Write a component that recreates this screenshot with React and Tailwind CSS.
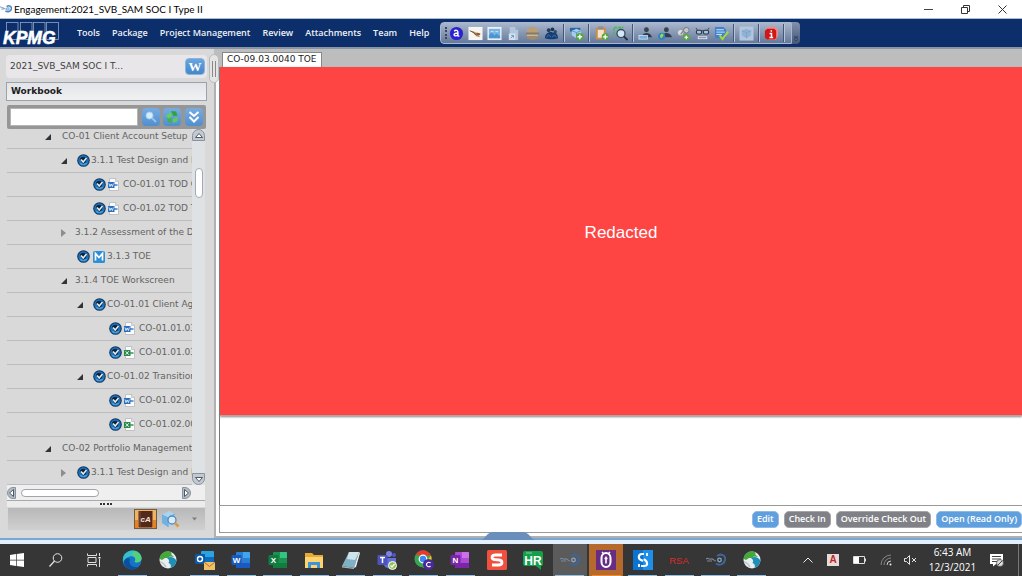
import { useState } from "react";

const menus = ["Tools", "Package", "Project Management", "Review", "Attachments", "Team", "Help"];

const rows = [
  { text: "CO-01 Client Account Setup", level: 0, arrow: "open" },
  { text: "3.1.1 Test Design and I", level: 1, arrow: "open", check: true },
  { text: "CO-01.01 TOD C", level: 2, check: true, doc: "word" },
  { text: "CO-01.02 TOD T", level: 2, check: true, doc: "word" },
  { text: "3.1.2 Assessment of the D", level: 1, arrow: "closed" },
  { text: "3.1.3 TOE", level: 1, check: true, doc: "m" },
  { text: "3.1.4 TOE Workscreen", level: 1, arrow: "open" },
  { text: "CO-01.01 Client Ag", level: 2, arrow: "open", check: true },
  { text: "CO-01.01.03", level: 3, check: true, doc: "word" },
  { text: "CO-01.01.03", level: 3, check: true, doc: "excel" },
  { text: "CO-01.02 Transition", level: 2, arrow: "open", check: true },
  { text: "CO-01.02.00", level: 3, check: true, doc: "word" },
  { text: "CO-01.02.00", level: 3, check: true, doc: "excel" },
  { text: "CO-02 Portfolio Management", level: 0, arrow: "open" },
  { text: "3.1.1 Test Design and I", level: 1, arrow: "closed", check: true },
];

const indents = ["pl-[38px]", "pl-[54px]", "pl-[70px]", "pl-[86px]"];

function Swirl({ className }) {
  return (
    <svg viewBox="0 0 20 12" className={className} fill="none">
      <path d="M0 3c2-1 3 1 5 1s2 2 5 2M2 6h5" stroke="#7ea6cc" strokeWidth="1.800" />
      <path d="M11 2c4-3 9 0 8 4s-6 6-10 3" stroke="#4f86bf" strokeWidth="2.600" />
      <circle cx="13" cy="6" r="2.400" fill="#b4cde6" stroke="#7fa9d2" strokeWidth="1.400" />
      <path d="M14 5l3-2" stroke="#b9cbe0" />
    </svg>
  );
}

function KpmgLogo() {
  return (
    <svg viewBox="0 0 58 26" className="w-[58px] h-[26px] overflow-visible" role="img" aria-label="KPMG">
      <g fill="#0c2f6b" stroke="#8ea3c6" strokeWidth="0.8">
        <rect x="4.500" y="2.500" width="11.500" height="17" />
        <rect x="18.500" y="2.500" width="11.500" height="17" />
        <rect x="31.500" y="2.500" width="11.500" height="17" />
        <rect x="44.500" y="2.500" width="12" height="17" />
      </g>
      <text x="1" y="24" fontFamily="Liberation Sans, sans-serif" fontWeight="bold" fontStyle="italic" fontSize="17.5" fill="#fff" stroke="#fff" strokeWidth="0.5">
        KPMG
      </text>
    </svg>
  );
}

function CheckBall() {
  return (
    <svg viewBox="0 0 13 13" className="w-[13px] h-[13px]">
      <circle cx="6.500" cy="6.500" r="6.300" fill="#16385c" />
      <circle cx="6.500" cy="6.500" r="5.200" fill="#1b6fb9" />
      <path d="M2 8.500a5 5 0 0 0 9 0c-2 .8-6 .8-9 0z" fill="#3d9be0" />
      <path d="M3 4.500a5 5 0 0 1 7 0l-1.500 4-2.500 1.500-2-3z" fill="#0c2138" />
      <path d="M4 5.500l2.200 2.500 3.300-4" stroke="#dfe9f2" strokeWidth="1.700" fill="none" />
    </svg>
  );
}

function DocIcon({ kind }) {
  if (kind === "m") {
    return (
      <svg viewBox="0 0 12 12" className="w-3 h-3 ml-0.5">
        <rect width="12" height="12" rx="1.500" fill="#2f8fd6" />
        <path d="M2.500 9.500v-7l3.500 4 3.500-4v7" stroke="#fff" strokeWidth="1.700" fill="none" />
      </svg>
    );
  }
  const color = kind === "word" ? "#2b6fc4" : "#2a8a4c";
  return (
    <svg viewBox="0 0 13 13" className="w-[13px] h-[13px]">
      <path d="M2.500 .5h6L11.500 3.500V12.500H2.500z" fill="#fbfbfb" stroke="#b5b8bc" strokeWidth="0.800" />
      <path d="M8.500 .5v3h3" fill="#dde" stroke="#b5b8bc" strokeWidth="0.700" />
      <path d="M7 7h3.500" stroke={color} strokeWidth="1.400" />
      <rect x="1" y="4" width="6.500" height="6" fill={color} />
      {kind === "word" ? (
        <path d="M2 5.500l1 3 1.200-2.500 1.200 2.500 1-3" stroke="#fff" strokeWidth="0.800" fill="none" />
      ) : (
        <path d="M2.700 5.300l3 3.400m0-3.400l-3 3.400" stroke="#fff" strokeWidth="0.900" />
      )}
    </svg>
  );
}

function TreeRow({ row }) {
  return (
    <li className={`h-6 shrink-0 flex items-center border-b border-[#bdbdbd] whitespace-nowrap ${indents[row.level]}`}>
      <span className={`shrink-0 flex items-center ${row.level === 0 ? "w-[17px]" : "w-3.5"}`}>
        {row.arrow === "open" && (
          <svg viewBox="0 0 6 6" className="w-1.5 h-1.5">
            <path d="M6 0v6H0z" fill="#333" />
          </svg>
        )}
        {row.arrow === "closed" && (
          <svg viewBox="0 0 6 8" className="w-1.5 h-2">
            <path d="M0 0l5 4-5 4z" fill="#8d8d8d" />
          </svg>
        )}
      </span>
      {row.check && (
        <span className="w-4 shrink-0 flex justify-center">
          <CheckBall />
        </span>
      )}
      {row.doc && (
        <span className="w-4 shrink-0 flex">
          <DocIcon kind={row.doc} />
        </span>
      )}
      <span>{row.text}</span>
    </li>
  );
}

/* Toolbar icons */
const tools = [
  {
    name: "Activity",
    art: (
      <>
        <circle cx="8" cy="8" r="7" fill="#2a22d0" />
        <path d="M5.500 5.500c1.500-1.500 4-1 4 .8v4.200l1.500.5M9.500 7.500c-3 0-4.500.8-4 2.200s3 1 4-.5" stroke="#fff" strokeWidth="1.500" fill="none" />
      </>
    ),
  },
  {
    name: "Sign",
    art: (
      <>
        <rect x="0.500" y="1" width="15" height="14" fill="#f7f5f2" />
        <path d="M3 5l4 1 3 2 3 4-4-1-3-3z" fill="#b58757" />
        <path d="M2 5l4 2 3 3" stroke="#6d5136" fill="none" />
        <path d="M9 8l4 1" stroke="#8a5b30" strokeWidth="2" />
      </>
    ),
  },
  {
    name: "Picture",
    art: (
      <>
        <rect x="0.500" y="1" width="15" height="14" fill="#e9f1f8" />
        <rect x="2" y="3" width="12" height="10" fill="#79b4e4" />
        <path d="M2 10l3-3 3 3 2-2 4 3v2H2z" fill="#4e95d0" />
        <path d="M4 6h3M9 6h3" stroke="#d4e6f5" />
      </>
    ),
  },
  {
    name: "Shortcut",
    art: (
      <>
        <path d="M4 1h6l3 3v11H4z" fill="#b4c6dc" />
        <path d="M10 1v3h3" fill="#8fa7c6" />
        <rect x="3" y="8" width="7" height="7" fill="#d5e2f0" />
        <path d="M5 13l3-3M5.500 10H8v2.500" stroke="#6f93bd" fill="none" />
      </>
    ),
  },
  {
    name: "Stack",
    art: (
      <>
        <path d="M1.500 7c0-8 13-8 13 0z" fill="#b99e78" />
        <path d="M1 8h14" stroke="#8d7a5e" strokeWidth="2" />
        <path d="M2 10h12" stroke="#cbb98f" strokeWidth="1.500" />
        <path d="M1.500 11h13c0 5-13 5-13 0z" fill="#a38a68" />
      </>
    ),
  },
  {
    name: "Team members",
    art: (
      <>
        <circle cx="5" cy="4.500" r="2" fill="#223d5c" />
        <circle cx="9" cy="3.500" r="2" fill="#1c3452" />
        <circle cx="12" cy="6" r="1.800" fill="#2e4c70" />
        <path d="M1 13c0-6 7-8 8-6 4-1 6 2 6 6-4 1.500-10 1.500-14 0z" fill="#173e73" />
        <path d="M3 12c1-3 3-3 4 0m2 0c1-3 3-3 4 0" stroke="#4c7fb5" fill="none" />
      </>
    ),
    rule: true,
  },
  {
    name: "Add workscreen",
    art: (
      <>
        <path d="M1 2h11v4H1z" fill="#2465a5" />
        <path d="M3 5l5-2 5 2v5l-5 3-5-3z" fill="#a5cdec" />
        <path d="M3 5l5 2 5-2M8 7v6" stroke="#5e97c5" fill="none" />
        <circle cx="11.500" cy="11.500" r="4" fill="#53a83b" />
        <path d="M11.500 9v5M9 11.500h5" stroke="#fff" strokeWidth="1.500" />
      </>
    ),
    rule: true,
  },
  {
    name: "Add to clipboard",
    art: (
      <>
        <rect x="2" y="1.500" width="10.500" height="13" rx="1" fill="#c98e4c" />
        <path d="M4 4h6.500v8.500H4z" fill="#f3e3c9" />
        <rect x="4.500" y="0.500" width="5.500" height="3" fill="#8e8e94" />
        <circle cx="12" cy="11.500" r="3.800" fill="#53a83b" />
        <path d="M12 9v5M9.500 11.500h5" stroke="#fff" strokeWidth="1.400" />
      </>
    ),
  },
  {
    name: "Find",
    art: (
      <>
        <path d="M1 9V1.500h10" stroke="#36c440" strokeWidth="1.600" fill="none" strokeDasharray="3 1" />
        <circle cx="8.500" cy="8" r="4.300" fill="#d3e9f7" stroke="#3c4c60" strokeWidth="1.400" />
        <path d="M11.500 11l4 4" stroke="#262f3c" strokeWidth="2" />
      </>
    ),
    rule: true,
  },
  {
    name: "User card",
    art: (
      <>
        <circle cx="9" cy="4" r="2.600" fill="#39424e" />
        <path d="M4 12c1-6 9-6 11 0z" fill="#2f3d52" />
        <rect x="1" y="10" width="9" height="4" fill="#76aee0" stroke="#d8e8f6" strokeWidth="0.800" />
      </>
    ),
  },
  {
    name: "Assign user",
    art: (
      <>
        <circle cx="10" cy="4" r="2.600" fill="#39424e" />
        <path d="M5 12c1-6 9-6 11 0z" fill="#2f3d52" />
        <circle cx="5" cy="11" r="3.800" fill="#2d83c9" />
        <path d="M3 10l2-2 2 1-1 3-2 1z" fill="#9fd64a" />
      </>
    ),
  },
  {
    name: "Add reference",
    art: (
      <>
        <circle cx="5" cy="7" r="3.500" fill="#dcdde0" stroke="#8e9299" />
        <circle cx="11" cy="4.500" r="3" fill="#c2c5c9" stroke="#6e7680" />
        <path d="M5 9l3-4" stroke="#7d848d" strokeWidth="1.500" />
        <circle cx="11" cy="12" r="3.500" fill="#53a83b" />
        <path d="M11 10v4M9 12h4" stroke="#fff" strokeWidth="1.300" />
      </>
    ),
  },
  {
    name: "Review glasses",
    art: (
      <>
        <path d="M1 2l2 3h10l2-3" stroke="#384656" fill="none" />
        <rect x="1.500" y="4.500" width="5.500" height="4" rx="1.500" fill="#a5c2df" stroke="#2c3947" strokeWidth="1.200" />
        <rect x="9" y="4.500" width="5.500" height="4" rx="1.500" fill="#a5c2df" stroke="#2c3947" strokeWidth="1.200" />
        <path d="M3 11h10v3H3z" fill="#e5ebf2" />
        <path d="M4 12.500h8" stroke="#64798f" />
      </>
    ),
  },
  {
    name: "Approve",
    art: (
      <>
        <path d="M1 1h9l3 3v9H1z" fill="#3f82cf" />
        <path d="M2.500 4h8M2.500 6.500h9M2.500 9h6" stroke="#dbe9f8" />
        <path d="M6 10l3 4 6-8" stroke="#a5d83b" strokeWidth="2.200" fill="none" />
      </>
    ),
    rule: true,
  },
  {
    name: "Package",
    art: (
      <>
        <rect x="0.500" y="0.500" width="15" height="15" fill="#b3c6de" />
        <path d="M3 5l5-2 5 2v5l-5 3-5-3z" fill="#8fb2d6" />
        <path d="M3 5l5 2 5-2M8 7v6" stroke="#7fa3ca" fill="none" />
      </>
    ),
    rule: true,
  },
  {
    name: "Information",
    art: (
      <>
        <path d="M4 1h8l3 3v7l-3 4H5l-3-3V4z" fill="#ee8b8b" />
        <path d="M3.500 3h7.500l2 2v7.500l-1.500 2H3.500l-2.500-2v-7.500z" fill="#cf1717" />
        <path d="M7.800 4.500v1.600M6 8h2v4M5.800 12.300h4" stroke="#fff" strokeWidth="1.600" fill="none" />
      </>
    ),
    rule: true,
  },
];

function Toolbar() {
  return (
    <div className="flex h-[22px]">
      <div className="flex items-center px-1 rounded-l border border-[#a9b8cf] bg-linear-to-b from-[#a9b7cc] to-[#66799a]">
        <span className="h-3 border-l-2 border-dotted border-[#37486a]" />
        {tools.map((t) => (
          <span key={t.name} className="flex items-center">
            <button aria-label={t.name} className="w-[19px] h-5 flex items-center justify-center">
              <svg viewBox="0 0 16 16" className="w-[15px] h-[15px]">{t.art}</svg>
            </button>
            {t.rule && <span className="h-[18px] w-1 border-l border-[#42557a] ml-0.5 shadow-[inset_1px_0_0_#b6c3d8]" />}
          </span>
        ))}
      </div>
      <button aria-label="More" className="w-2 flex items-end justify-center pb-0.5 rounded-r bg-linear-to-b from-[#8392ac] to-[#44587b]">
        <svg viewBox="0 0 6 6" className="w-1.5 h-1.5">
          <path d="M1 1h4M1.500 3h3L3 5z" stroke="#1b2b48" strokeWidth="0.800" fill="#b9c5d6" />
        </svg>
      </button>
    </div>
  );
}

function SquareButton({ label, children }) {
  return (
    <button aria-label={label} className="w-[18px] h-[18px] shrink-0 flex items-center justify-center rounded bg-linear-to-b from-[#79ace0] to-[#4f8fd0]">
      {children}
    </button>
  );
}

function Sidebar() {
  const [query, setQuery] = useState("");
  return (
    <aside className="w-[214px] shrink-0 flex flex-col bg-[#d9d9d9] pl-1.5 pt-1.5 pb-[7px] text-[#636363]">
      <div className="w-[201px] h-[23px] shrink-0 rounded bg-[#e8e6e8] flex items-center justify-between pl-1 pr-0.5 text-[#3f3f3f]">
        <span>2021_SVB_SAM SOC I T...</span>
        <button aria-label="Workbook view" className="w-5 h-[17px] rounded border border-[#87b3e0] bg-linear-to-b from-[#6aa5df] to-[#4587c8] flex items-center justify-center text-white font-bold text-[13px] leading-none font-['Liberation_Serif',serif]">
          W
        </button>
      </div>
      <h2 className="w-[201px] h-[19px] shrink-0 mt-1 border border-[#9aa3ad] bg-linear-to-b from-[#e2e4e8] to-[#f1f1f2] flex items-center pl-1 font-bold text-[#1d1d1d]">
        Workbook
      </h2>
      <div className="w-[199px] h-6 shrink-0 ml-px mt-1 rounded-xs bg-[#969696] flex items-center justify-between px-[3px]">
        <input
          aria-label="Search workbook"
          value={query}
          onChange={(e) => setQuery(e.target.value)}
          className="w-32 h-[18px] bg-white border border-[#b5b5b5] px-1"
        />
        <SquareButton label="Search">
          <svg viewBox="0 0 14 14" className="w-3.5 h-3.5">
            <circle cx="5.500" cy="5.500" r="3.500" fill="#d4ecfb" stroke="#a3cdee" />
            <path d="M8 8l4 4" stroke="#9fbfe0" strokeWidth="2" />
          </svg>
        </SquareButton>
        <SquareButton label="Refresh">
          <svg viewBox="0 0 14 14" className="w-3.5 h-3.5">
            <path d="M6 1l5 .5 1.500 4-4 .5z" fill="#2fa336" />
            <path d="M1 6l4-3.500 2 3-3 3z" fill="#66d34c" />
            <path d="M1.500 9l5-1-.5 5-3-1z" fill="#3cb93c" />
            <path d="M8 9l5-2-1 4.500-4 1.500z" fill="#63cf45" />
          </svg>
        </SquareButton>
        <SquareButton label="Expand all">
          <svg viewBox="0 0 14 14" className="w-3.5 h-3.5">
            <path d="M2.500 2l4.500 4 4.500-4M2.500 7l4.500 4.500L11.500 7" stroke="#fff" strokeWidth="2" fill="none" />
          </svg>
        </SquareButton>
      </div>

      <div className="w-[198px] flex-1 min-h-0 ml-px flex">
        <ul className="flex-1 min-w-0 flex flex-col justify-end overflow-hidden">
          {rows.map((row, i) => (
            <TreeRow key={i} row={row} />
          ))}
        </ul>
        <div className="w-[13px] shrink-0 flex flex-col items-center bg-[#dfe2e4]">
          <button aria-label="Scroll up" className="w-[13px] h-3 rounded-t-lg border border-[#8a929c] bg-[#c3c9d1] flex items-center justify-center">
            <svg viewBox="0 0 8 5" className="w-2 h-[5px]">
              <path d="M4 .5l3.500 4h-7z" fill="#fff" stroke="#4e5864" />
            </svg>
          </button>
          <div className="w-2 h-[30px] mt-[27px] rounded-full bg-white border border-[#a5aab2]" />
          <button aria-label="Scroll down" className="w-[13px] h-3 mt-auto rounded-b-lg border border-[#8a929c] bg-[#c3c9d1] flex items-center justify-center">
            <svg viewBox="0 0 8 5" className="w-2 h-[5px]">
              <path d="M4 4.500l3.500-4h-7z" fill="#fff" stroke="#4e5864" />
            </svg>
          </button>
        </div>
      </div>

      <div className="w-[198px] h-4 shrink-0 ml-px flex items-center bg-[#efefef] border-b border-[#a9a9a9]">
        <button aria-label="Scroll left" className="w-[9px] h-3 rounded-l-lg border border-[#8a929c] bg-[#b3bbc7] flex items-center justify-center">
          <svg viewBox="0 0 5 8" className="w-[5px] h-2">
            <path d="M.5 4l4-3.500v7z" fill="#fff" stroke="#4e5864" />
          </svg>
        </button>
        <div className="w-[78px] h-2 ml-[5px] rounded-full bg-white border border-[#a0a4ab]" />
        <button aria-label="Scroll right" className="w-[9px] h-3 ml-auto mr-3.5 rounded-r-lg border border-[#8a929c] bg-[#b3bbc7] flex items-center justify-center">
          <svg viewBox="0 0 5 8" className="w-[5px] h-2">
            <path d="M4.500 4l-4-3.500v7z" fill="#fff" stroke="#4e5864" />
          </svg>
        </button>
      </div>
      <div className="w-[198px] h-1.5 shrink-0 ml-px flex items-center justify-center bg-[#ececec]">
        <span className="w-3 border-t-2 border-dotted border-[#333]" />
      </div>
      <div className="w-[199px] h-6 shrink-0 ml-px border border-[#d8d8d8] bg-linear-to-b from-[#b8b8b8] to-[#d0d0d0] flex items-center justify-end pr-2">
        <button aria-label="eAudIT">
          <svg viewBox="0 0 23 20" className="w-[23px] h-5">
            <rect x="0.500" y="0.500" width="22" height="19" fill="#efb462" stroke="#6e5c46" />
            <path d="M1 11h3v8H1zM19 11h3v8h-3z" fill="#ee7f1d" />
            <rect x="4.500" y="2" width="14" height="16.500" fill="#54281c" />
            <path d="M6 2v16" stroke="#7f4a39" />
            <text x="6.500" y="13" fontFamily="Liberation Sans, sans-serif" fontStyle="italic" fontWeight="bold" fontSize="8" fill="#f0e4dc">cA</text>
          </svg>
        </button>
        <button aria-label="Search package" className="ml-1">
          <svg viewBox="0 0 19 18" className="w-[19px] h-[18px]">
            <path d="M1 5l7-4 6 3v9l-6 4-7-4z" fill="#a9d3f2" />
            <path d="M1 5l6 3 7-4M7 8v9" stroke="#5fa1d4" fill="none" />
            <path d="M1 5l6 3v9l-6-4z" fill="#6fb1e2" />
            <circle cx="11" cy="10" r="4" fill="#e3f2fc" fillOpacity="0.800" stroke="#5689b5" strokeWidth="1.300" />
            <path d="M14 13l3.500 3.500" stroke="#d99a4a" strokeWidth="2.600" />
          </svg>
        </button>
        <button aria-label="More tools" className="ml-3">
          <svg viewBox="0 0 5 4" className="w-[5px] h-1">
            <path d="M0 .5h5L2.500 3.500z" fill="#7d7d7d" />
          </svg>
        </button>
      </div>
    </aside>
  );
}

const actions = [
  { name: "Edit", tone: "bg-[#5f9fdd] border-[#8dbbe8]" },
  { name: "Check In", tone: "bg-[#7f8186] border-[#a3a5a9]" },
  { name: "Override Check Out", tone: "bg-[#7f8186] border-[#a3a5a9]" },
  { name: "Open (Read Only)", tone: "bg-[#5f9fdd] border-[#8dbbe8]" },
];

/* Taskbar icons */
function Globe() {
  return (
    <>
      <circle cx="10" cy="10" r="8.500" fill="#e9eef0" />
      <path d="M2 6C5 1 11 0 14 3l-1 1 3 3-4-.5-2 1.500-3 0-3 2-2-1z" fill="#46a83a" />
      <path d="M9 8c3-2 8-1 9.500 3-1 4-3 6-6 7 1-3 0-4-2-5 1-2 1-3-1.500-5z" fill="#1f8fb8" />
      <path d="M2 12c3 0 4 2 6 5" stroke="#bac6cb" strokeWidth="1.500" fill="none" />
    </>
  );
}

function Vortex() {
  return (
    <g fill="none">
      <path d="M0 9c2-2 3 1 5 0s3 2 5 2M1 11h5" stroke="#76899f" strokeWidth="1.100" />
      <path d="M11 6c4-3 9-.5 8 4s-6 6-9 3.500" stroke="#3d6597" strokeWidth="2" />
      <circle cx="13.500" cy="10" r="1.800" stroke="#8fa6c2" strokeWidth="1.300" />
    </g>
  );
}

function Tile({ color, dark, light, letter }) {
  return (
    <>
      <rect x="5" y="2" width="14" height="16" rx="1" fill={color} />
      <path d="M12 2h6a1 1 0 0 1 1 1v5h-7z" fill={light} />
      <path d="M5 13h14v4a1 1 0 0 1-1 1H6a1 1 0 0 1-1-1z" fill={dark} />
      <rect x="0.500" y="5" width="10" height="10" rx="1" fill={dark} />
      <text x="5.500" y="13" textAnchor="middle" fontFamily="Liberation Sans, sans-serif" fontWeight="bold" fontSize="8" fill="#fff">{letter}</text>
    </>
  );
}

const apps = [
  {
    name: "Edge",
    line: true,
    art: (
      <>
        <circle cx="10" cy="10" r="9.500" fill="#1673c6" />
        <path d="M1 8C3-2 19-2 19.500 8c0 4-4 5-7 4 3-4-2-7-6-5-3 1-5 4-5 6z" fill="#35c1c8" />
        <path d="M12 1c6 1 8 6 7.500 8-.5 3-4 4-7 3 2-3 1-6-3-7z" fill="#55d07a" />
        <path d="M8 9c-2 5 2 9 8 8-4 4-12 3-14-4 0-4 3-6 6-4z" fill="#0c4f9e" />
      </>
    ),
  },
  { name: "Webex", art: <Globe /> },
  {
    name: "Outlook",
    line: true,
    art: (
      <>
        <rect x="6" y="1" width="13" height="13" rx="1" fill="#28a3e4" />
        <path d="M6 7h13v6H6z" fill="#0f6cbd" />
        <rect x="0" y="4" width="10" height="10" rx="1" fill="#0a5aa8" />
        <circle cx="5" cy="9" r="2.500" stroke="#fff" strokeWidth="1.400" fill="none" />
        <rect x="9" y="12" width="11" height="8" fill="#f0c069" />
        <path d="M9 12l5.500 4.500L20 12" stroke="#a9762a" fill="none" />
      </>
    ),
  },
  { name: "Word", line: true, art: <Tile color="#2b7cd3" dark="#185abd" light="#41a5ee" letter="W" /> },
  { name: "Excel", line: true, art: <Tile color="#1d9150" dark="#107c41" light="#33c481" letter="X" /> },
  {
    name: "File Explorer",
    line: true,
    art: (
      <>
        <path d="M1 3h7l2 2h9v13H1z" fill="#eaa937" />
        <path d="M1 7h18v11H1z" fill="#fbd46f" />
        <path d="M4 18v-6h12v6h-3v-3H7v3z" fill="#3f93d8" />
      </>
    ),
  },
  {
    name: "Notepad",
    line: true,
    art: (
      <>
        <path d="M8 2l10 0-5 16-12-2z" fill="#7fb0c4" />
        <path d="M8 2l10 0-4 8-8-1z" fill="#cfe4ea" />
        <path d="M18 2l1 1-4 14-2 1z" fill="#eef5f6" />
        <path d="M1 16l12 2v1L1 17.500z" fill="#9fb5bb" />
      </>
    ),
  },
  {
    name: "Teams",
    line: true,
    art: (
      <>
        <circle cx="12" cy="4" r="3" fill="#7b83eb" />
        <circle cx="17" cy="5" r="2" fill="#5059c9" />
        <path d="M7 8h12v6c0 6-12 6-12 0z" fill="#6670d8" />
        <rect x="0.500" y="5" width="10" height="10" rx="1" fill="#4b53bc" />
        <path d="M3 7.500h5M5.500 7.500v5.500" stroke="#fff" strokeWidth="1.500" />
        <circle cx="15.500" cy="15.500" r="4" fill="#92c353" stroke="#fff" />
        <path d="M13.500 15.500l1.500 1.500 2.500-3" stroke="#fff" strokeWidth="1.200" fill="none" />
      </>
    ),
  },
  {
    name: "Chrome",
    line: true,
    art: (
      <>
        <circle cx="9" cy="9" r="8.500" fill="#36a852" />
        <path d="M1.500 5C5-2 14-1 17 5.500H9z" fill="#e33b2e" />
        <path d="M17 5.500C19 11 15 17 9 17.500l4-7z" fill="#fbc116" />
        <circle cx="9" cy="9" r="3.800" fill="#4285f4" stroke="#fff" strokeWidth="1.200" />
        <circle cx="14.500" cy="14.500" r="5.500" fill="#4a2a9a" />
        <path d="M16.500 13c-1.500-1.500-4-.5-4 1.500s2.500 3 4 1.500" stroke="#fff" strokeWidth="1.200" fill="none" />
      </>
    ),
  },
  { name: "OneNote", line: true, art: <Tile color="#ae4bd5" dark="#7a26a8" light="#cc70ee" letter="N" /> },
  {
    name: "Snagit",
    art: (
      <>
        <rect width="20" height="20" rx="1.500" fill="#f1503f" />
        <path d="M15 5H8.500C4 5 4 9.500 8 9.700l4 .3c4 .3 4 5-.5 5H5" stroke="#fff" strokeWidth="2.800" fill="none" />
      </>
    ),
  },
  {
    name: "HR",
    art: (
      <>
        <path d="M2 1h16a2 2 0 0 1 2 2v11a2 2 0 0 1-2 2v4l-5-4H2a2 2 0 0 1-2-2V3a2 2 0 0 1 2-2z" fill="#14a04a" />
        <text x="10" y="14.500" textAnchor="middle" fontFamily="Liberation Sans, sans-serif" fontWeight="bold" fontSize="12" fill="#fff">HR</text>
        <path d="M3 3h6" stroke="#7fd39d" />
      </>
    ),
  },
  { name: "eAudIT", bg: "bg-[#5b5b5b]", line: true, art: <Vortex /> },
  {
    name: "Vault",
    bg: "bg-[#b5692d]",
    line: true,
    lineColor: "border-[#f08a2c]",
    art: (
      <>
        <rect width="20" height="20" fill="#672d84" />
        <path d="M5.500 8a4.500 5 0 0 1 9 0v4a4.500 5 0 0 1-9 0z" stroke="#fff" strokeWidth="2" fill="none" />
        <path d="M10 6.500v7M8.500 8.500h3" stroke="#fff" strokeWidth="1.600" />
        <path d="M6 2l2 2M14 2l-2 2" stroke="#fff" strokeWidth="1.400" />
      </>
    ),
  },
  {
    name: "Sync",
    line: true,
    art: (
      <>
        <rect width="20" height="20" fill="#1d8fe8" />
        <path d="M0 0h10v20H0z" fill="#0a74d0" />
        <path d="M11 4H9C5 4 5 9 8 10l2 1" stroke="#fff" strokeWidth="2.200" fill="none" />
        <path d="M8 16h3c4 0 4-4 1-6l-1-1" stroke="#fff" strokeWidth="2.200" fill="none" />
        <path d="M14 3v3M6 14v3" stroke="#fff" strokeWidth="1.800" />
      </>
    ),
  },
  {
    name: "RSA",
    line: true,
    art: (
      <text x="10" y="13.500" textAnchor="middle" fontFamily="Liberation Sans, sans-serif" fontSize="9.500" fill="#dd2a2a">RSA</text>
    ),
  },
  { name: "eAudIT tools", line: true, art: <Vortex /> },
  { name: "AnyConnect", line: true, art: <Globe /> },
];

function Taskbar() {
  return (
    <footer className="h-8 shrink-0 flex items-stretch bg-[#363636] text-white">
      <div className="w-[115px] shrink-0 flex items-center pl-2.5">
        <button aria-label="Start" className="w-[39px]">
          <svg viewBox="0 0 14 14" className="w-3.5 h-3.5">
            <path d="M0 2l6-.9v5.600H0zM6.700 1L14 0v6.700H6.700zM0 7.400h6V13l-6-.9zM6.700 7.400H14V14l-7.300-1z" fill="#fff" />
          </svg>
        </button>
        <button aria-label="Search" className="w-[38px]">
          <svg viewBox="0 0 14 14" className="w-3.5 h-3.5">
            <circle cx="8.500" cy="5" r="4.300" stroke="#e5e5e5" fill="none" />
            <path d="M5.500 8L.5 13.500" stroke="#e5e5e5" strokeWidth="1.200" />
          </svg>
        </button>
        <button aria-label="Task view">
          <svg viewBox="0 0 14 14" className="w-3.5 h-3.5">
            <path d="M.5 2.500V.5m0 2h9v-2M.5 13.500v-2h9v2M1 4.500h8v5H1zM12.500 0v3M12.500 6v8" stroke="#e0e0e0" fill="none" />
            <path d="M11.500 4h2v1.500h-2z" fill="#fff" />
          </svg>
        </button>
      </div>
      <nav aria-label="Apps" className="w-[64%] shrink-0 flex justify-between">
        {apps.map((app) => (
          <button
            key={app.name}
            aria-label={app.name}
            className={`w-[34px] flex items-center justify-center ${app.bg || ""}`}
          >
            <span className={`w-[29px] h-full flex items-center justify-center border-b ${app.lineColor || (app.line ? "border-[#8fc0e8]" : "border-transparent")}`}>
              <svg viewBox="0 0 20 20" className="w-5 h-5">{app.art}</svg>
            </span>
          </button>
        ))}
      </nav>
      <div className="ml-auto flex items-center">
        <svg viewBox="0 0 10 6" className="w-2.5 h-1.5">
          <path d="M.5 5.500L5 1l4.500 4.500" stroke="#eee" fill="none" />
        </svg>
        <span className="w-3 h-3 ml-3.5 bg-[#e6dcdc] text-[#c62828] text-[10px] leading-3 font-bold text-center font-['Liberation_Sans',sans-serif]">A</span>
        <svg viewBox="0 0 13 8" className="w-[13px] h-2 ml-3.5">
          <path d="M.5.5h11v7H.5zM12.500 2.500v3" stroke="#ddd" fill="none" />
          <path d="M1 1h5v6H1z" fill="#fff" />
        </svg>
        <svg viewBox="0 0 12 12" className="w-3 h-3 ml-3.5" fill="none">
          <path d="M1 11A10 10 0 0 1 11 1M4 11a7 7 0 0 1 7-7" stroke="#858585" />
          <path d="M7 11a4 4 0 0 1 4-4" stroke="#ccc" />
          <circle cx="10.500" cy="10.500" r="1" fill="#eee" />
        </svg>
        <svg viewBox="0 0 13 10" className="w-[13px] h-2.5 ml-3" fill="none" stroke="#e5e5e5">
          <path d="M.5 3.500h2l3-3v9l-3-3h-2zM8 3l4 4M12 3L8 7" />
        </svg>
        <div className="w-[71px] text-center text-[10px] leading-[15px] font-['Open_Sans',sans-serif]">
          <div>6:43 AM</div>
          <div>12/3/2021</div>
        </div>
        <svg viewBox="0 0 14 14" className="w-3.5 h-3.5 ml-0.5">
          <path d="M0 1h13v10H6l-3 2.500V11H0z" fill="#fff" />
          <path d="M2 3.500h9M2 6h9M2 8.500h5" stroke="#444" />
          <circle cx="10" cy="10" r="3.500" fill="#ddd" stroke="#444" strokeWidth="0.700" />
          <path d="M8 12l4-4" stroke="#444" />
        </svg>
        <span className="h-8 w-1 ml-3.5 border-l border-[#777]" />
      </div>
    </footer>
  );
}

export default function App() {
  return (
    <div className="h-screen flex flex-col overflow-hidden bg-white text-[9px] font-['DejaVu_Sans',sans-serif]">
      {/* Title bar */}
      <header className="h-[19px] shrink-0 flex items-center bg-white border-b border-[#a9bfd6] text-black">
        <Swirl className="w-3 h-2 mr-0.5" />
        <h1 className="text-[10px] font-[Lato,sans-serif]">Engagement:2021_SVB_SAM SOC I Type II</h1>
        <div className="ml-auto flex items-center gap-7 pr-[15px]">
          <button aria-label="Minimize">
            <svg viewBox="0 0 9 9" className="w-[9px] h-[9px]"><path d="M0 4.500h9" stroke="#444" /></svg>
          </button>
          <button aria-label="Restore">
            <svg viewBox="0 0 9 9" className="w-[9px] h-[9px]" fill="none" stroke="#333"><path d="M.5 2.500h6v6h-6zM2.500 2V.5h6v6H7" /></svg>
          </button>
          <button aria-label="Close">
            <svg viewBox="0 0 9 9" className="w-[9px] h-[9px]"><path d="M.5.5l8 8m0-8l-8 8" stroke="#333" /></svg>
          </button>
        </div>
      </header>

      {/* Menu bar */}
      <div className="h-[30px] shrink-0 flex items-center bg-[#0c2f6b] border-b-2 border-[#8c93a3] pl-0.5">
        <KpmgLogo />
        <nav className="flex gap-3 ml-[17px] mr-[11px] font-semibold text-[#eef1f6] whitespace-nowrap font-['Open_Sans',sans-serif]">
          {menus.map((m) => (
            <button key={m}>{m}</button>
          ))}
        </nav>
        <Toolbar />
      </div>

      <div className="flex-1 min-h-0 flex">
        <Sidebar />
        <main className="flex-1 min-w-0 flex flex-col relative">
          <div className="absolute -left-[5px] top-[5px] w-[10px] h-[29px] rounded-full border border-[#bbb] bg-[#e4e4e4] flex justify-center items-center gap-0.5">
            <span className="w-px h-4 bg-[#888]" />
            <span className="w-px h-4 bg-[#888]" />
          </div>
          <div className="h-[18px] shrink-0 flex items-end bg-[#bdbdbd] pl-2">
            <button className="h-[15px] px-1 bg-white border border-b-0 border-[#888] text-[#222] whitespace-nowrap">CO-09.03.0040 TOE</button>
          </div>
          <div className="flex-1 min-h-0 flex flex-col bg-white border-l-2 border-b-2 border-[#b0b0b0] pl-[3px] pb-[3px]">
            <section className="flex-1 min-h-0 bg-white border-l border-[#777]">
              <div className="h-[349px] flex items-center justify-center bg-[#ff4444] text-white text-[17px] pb-[17px] border-b border-[#b9a0a0] shadow-[0_1px_2px_#888] font-['Liberation_Sans',sans-serif]">
                Redacted
              </div>
            </section>
            <div className="h-[28px] shrink-0 flex items-center justify-end gap-[5px] bg-white border-l border-y border-[#999]">
              {actions.map((a) => (
                <button key={a.name} className={`h-[17px] px-1 rounded-[5px] border flex items-center font-semibold text-white whitespace-nowrap font-['Open_Sans',sans-serif] ${a.tone}`}>
                  {a.name}
                </button>
              ))}
            </div>
          </div>
        </main>
      </div>

      <div className="h-1.5 shrink-0 relative bg-[#e3effa] border-t-2 border-[#76a9d8]">
        <svg viewBox="0 0 56 8" className="absolute left-[47%] -top-2 w-14 h-2">
          <path d="M0 8Q3 8 6 4T14 0h28q5 0 8 4t6 4z" fill="#6a8fbd" />
        </svg>
      </div>

      <Taskbar />
    </div>
  );
}
